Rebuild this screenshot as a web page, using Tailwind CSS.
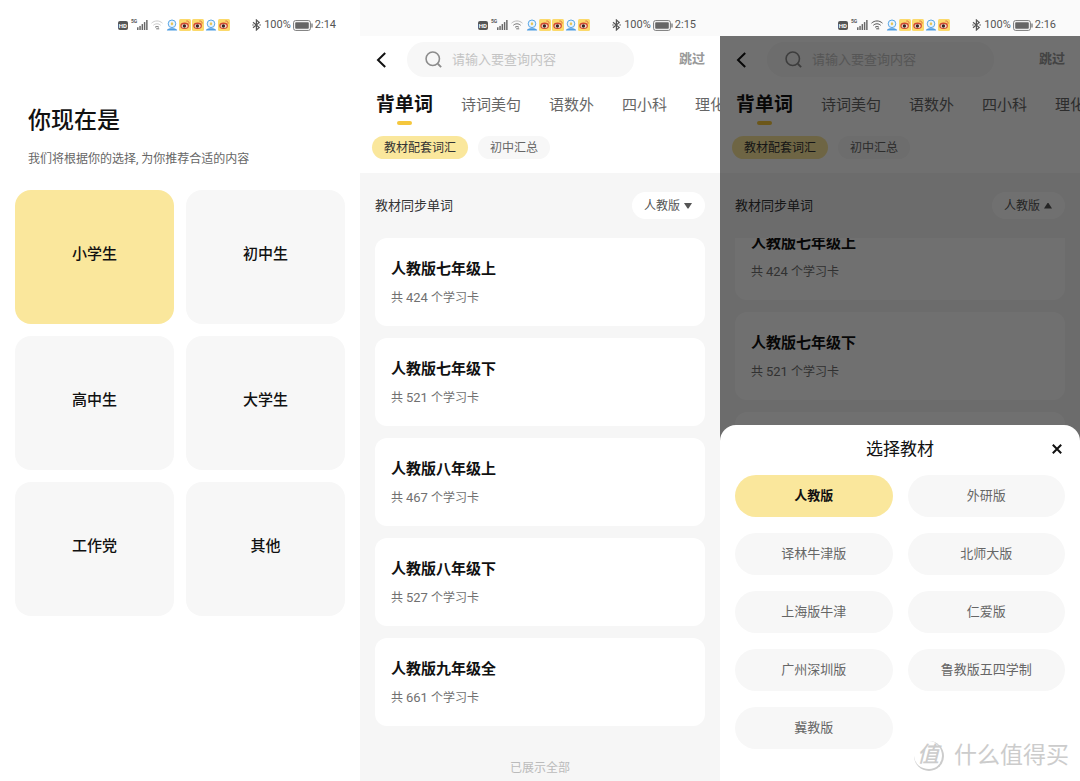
<!DOCTYPE html>
<html lang="zh-CN">
<head>
<meta charset="utf-8">
<meta name="viewport" content="width=device-width, initial-scale=1">
<title>背单词</title>
<script src="https://cdn.jsdelivr.net/npm/@tailwindcss/browser@4"></script>
</head>
<body class="bg-white font-['Roboto','Noto_Sans_CJK_SC',sans-serif] text-[#111]">
<svg class="hidden" aria-hidden="true">
  <symbol id="signal" viewBox="0 0 12 11"><g fill="#666"><rect x="0" y="8" width="1.6" height="3"/><rect x="2.5" y="6.5" width="1.6" height="4.5"/><rect x="5" y="4.5" width="1.6" height="6.5"/><rect x="7.5" y="2.3" width="1.6" height="8.7"/><rect x="10" y="0" width="1.6" height="11"/></g></symbol>
  <symbol id="user" viewBox="0 0 12 12"><circle cx="6" cy="4.8" r="3.8" fill="#e9f4fd" stroke="#5aa7e6" stroke-width="1"/><path d="M6 2.8 7.4 5 6 6.6 4.6 5Z" fill="#e8c34a"/><path d="M.8 11.4C1.4 9.5 3 9.2 6 9.2s4.6.3 5.2 2.2Z" fill="#4f9de2"/></symbol>
  <symbol id="weibo" viewBox="0 0 12 12"><rect width="12" height="12" rx="1.5" fill="#fbd96b"/><ellipse cx="5.6" cy="6.8" rx="4.3" ry="3.2" fill="#d04a35"/><ellipse cx="5.6" cy="7" rx="3" ry="2.1" fill="#f6e4d4"/><circle cx="5.4" cy="7" r="1.7" fill="#3a2420"/><path d="M7.4 2c1.900-.2 2.900 1 2.600 2.700" fill="none" stroke="#e0693e" stroke-width="1"/></symbol>
  <symbol id="bt" viewBox="0 0 9 12"><path d="M1 3.300 7.200 8.500 4.400 11V1l2.800 2.500L1 8.700" fill="none" stroke="#555" stroke-width="1.200"/><circle cx="1" cy="6" r=".7" fill="#555"/><circle cx="8.100" cy="6" r=".7" fill="#555"/></symbol>
  <symbol id="battery" viewBox="0 0 20 11"><rect x=".6" y=".6" width="16.800" height="9.800" rx="2" fill="none" stroke="#777" stroke-width="1"/><rect x="2.200" y="2.200" width="13.600" height="6.600" rx=".8" fill="#666"/><path d="M19 3.500v4" stroke="#777" stroke-width="1.300"/></symbol>
  <symbol id="back" viewBox="0 0 11 16"><path d="M9.200 1 2 8l7.200 7" fill="none" stroke="#111" stroke-width="2"/></symbol>
  <symbol id="search" viewBox="0 0 16 16"><circle cx="7.300" cy="7.300" r="6.300" fill="none" stroke="#8c8c8c" stroke-width="1.500"/><path d="m12 12 3.200 3.200" stroke="#8c8c8c" stroke-width="1.700"/></symbol>
</svg>

<main class="grid min-h-screen grid-cols-3">

  <!-- Identity picker -->
  <section class="flex min-w-0 flex-col bg-white">
    <header class="flex h-9 items-center justify-end pr-6 pt-[14px] text-[11px] text-[#555]">
      <span class="mr-[3px] flex h-[9px] w-[10px] items-center justify-center rounded-[2px] bg-[#555] text-[6px] font-bold text-white">HD</span>
      <span class="h-3 text-[5px] leading-[5px] font-bold">5G</span>
      <svg class="mr-[3px] h-[10px] w-[11px]"><use href="#signal"/></svg>
      <svg class="mr-[3px] h-[10px] w-3" viewBox="0 0 12 10" fill="none" stroke="#ccc"><path d="M.5 3.200c3.300-3 7.700-3 11 0M2.300 5.300c2.200-2 5.200-2 7.400 0"/><path d="M4 7.300c1.200-1 2.800-1 4 0M5.200 8.800h3" stroke="#777"/></svg>
      <span class="mr-[22px] flex gap-px">
        <svg class="size-3"><use href="#user"/></svg><svg class="size-3"><use href="#weibo"/></svg><svg class="size-3"><use href="#weibo"/></svg><svg class="size-3"><use href="#user"/></svg><svg class="size-3"><use href="#weibo"/></svg>
      </span>
      <svg class="mr-[3px] h-3 w-[9px]"><use href="#bt"/></svg>
      <span class="mr-[2px]">100%</span>
      <svg class="mr-[2px] h-[11px] w-5"><use href="#battery"/></svg>
      <time>2:14</time>
    </header>
    <div class="px-7 pt-[69px]">
      <h1 class="text-[23px] leading-8 font-medium">你现在是</h1>
      <p class="mt-3 text-[12px] leading-5 whitespace-nowrap text-[#666]">我们将根据你的选择, 为你推荐合适的内容</p>
    </div>
    <div class="mt-[21px] grid grid-cols-2 gap-3 px-[15px] text-[15px] font-medium">
      <button class="h-[134px] rounded-2xl bg-[#fae79c] pb-[6px]">小学生</button>
      <button class="h-[134px] rounded-2xl bg-[#f7f7f7] pb-[6px]">初中生</button>
      <button class="h-[134px] rounded-2xl bg-[#f7f7f7] pb-[6px]">高中生</button>
      <button class="h-[134px] rounded-2xl bg-[#f7f7f7] pb-[6px]">大学生</button>
      <button class="h-[134px] rounded-2xl bg-[#f7f7f7] pb-[6px]">工作党</button>
      <button class="h-[134px] rounded-2xl bg-[#f7f7f7] pb-[6px]">其他</button>
    </div>
  </section>

  <!-- Word list -->
  <section class="flex min-w-0 flex-col bg-white">
    <header class="flex h-9 items-center justify-end bg-[#fafafa] pr-6 pt-[14px] text-[11px] text-[#555]">
      <span class="mr-[3px] flex h-[9px] w-[10px] items-center justify-center rounded-[2px] bg-[#555] text-[6px] font-bold text-white">HD</span>
      <span class="h-3 text-[5px] leading-[5px] font-bold">5G</span>
      <svg class="mr-[3px] h-[10px] w-[11px]"><use href="#signal"/></svg>
      <svg class="mr-[3px] h-[10px] w-3" viewBox="0 0 12 10" fill="none" stroke="#777"><path d="M.5 3.200c3.300-3 7.700-3 11 0" stroke="#bbb"/><path d="M2.300 5.300c2.200-2 5.200-2 7.400 0M4 7.300c1.200-1 2.800-1 4 0M5.200 8.800h3"/></svg>
      <span class="mr-[22px] flex gap-px">
        <svg class="size-3"><use href="#user"/></svg><svg class="size-3"><use href="#weibo"/></svg><svg class="size-3"><use href="#weibo"/></svg><svg class="size-3"><use href="#user"/></svg><svg class="size-3"><use href="#weibo"/></svg>
      </span>
      <svg class="mr-[3px] h-3 w-[9px]"><use href="#bt"/></svg>
      <span class="mr-[2px]">100%</span>
      <svg class="mr-[2px] h-[11px] w-5"><use href="#battery"/></svg>
      <time>2:15</time>
    </header>
    <div class="flex items-center pt-[6px] pr-[15px] pl-4">
      <button aria-label="返回"><svg class="h-4 w-[11px]"><use href="#back"/></svg></button>
      <label class="ml-5 flex h-[35px] min-w-0 flex-1 items-center gap-[10px] rounded-full bg-[#f7f7f7] pl-[18px]">
        <svg class="size-[17px] shrink-0"><use href="#search"/></svg>
        <input type="search" aria-label="搜索" placeholder="请输入要查询内容" class="w-full min-w-0 bg-transparent text-[13px] outline-none placeholder:text-[#c4c4c4]">
      </label>
      <button class="ml-[45px] pb-[2px] text-[13px] font-bold text-[#999]">跳过</button>
    </div>
    <nav class="mt-[10px] flex h-[38px] gap-7 overflow-hidden pl-4 text-[15px] leading-9 whitespace-nowrap text-[#666]">
      <a href="#words" class="flex flex-col items-center text-[19px] font-bold text-[#111]"><span class="h-[34px]">背单词</span><span class="h-1 w-[15px] rounded-full bg-[#f5c73d]"></span></a>
      <a href="#poems">诗词美句</a>
      <a href="#main">语数外</a>
      <a href="#four">四小科</a>
      <a href="#science">理化</a>
    </nav>
    <div class="mt-[11px] mb-[14px] flex gap-[10px] pl-3 text-[12px]">
      <button class="h-[23px] rounded-full bg-[#fae79c] px-3 text-[#333]">教材配套词汇</button>
      <button class="h-[23px] rounded-full bg-[#f7f7f7] px-3 text-[#666]">初中汇总</button>
    </div>
    <div class="flex flex-1 flex-col bg-[#f6f6f6] px-[15px]">
      <div class="flex h-[65px] items-center justify-between">
        <h2 class="text-[13px] text-[#333]">教材同步单词</h2>
        <label class="flex h-[27px] items-center rounded-full bg-white px-3 text-[12px] text-[#555]">
          <select aria-label="教材版本" class="appearance-none bg-transparent outline-none"><option>人教版</option></select>
          <svg class="ml-[2px] h-[6px] w-[10px]" viewBox="0 0 10 6"><path d="M1 0h8L5.500 5.500h-1Z" fill="#555"/></svg>
        </label>
      </div>
      <ul class="flex flex-col gap-3">
        <li class="h-[88px] rounded-xl bg-white px-4 pt-5"><h3 class="text-[15px] leading-[22px] font-bold">人教版七年级上</h3><p class="mt-2 text-[12px] leading-5 text-[#707070]">共 <span class="text-[13px]">424</span> 个学习卡</p></li>
        <li class="h-[88px] rounded-xl bg-white px-4 pt-5"><h3 class="text-[15px] leading-[22px] font-bold">人教版七年级下</h3><p class="mt-2 text-[12px] leading-5 text-[#707070]">共 <span class="text-[13px]">521</span> 个学习卡</p></li>
        <li class="h-[88px] rounded-xl bg-white px-4 pt-5"><h3 class="text-[15px] leading-[22px] font-bold">人教版八年级上</h3><p class="mt-2 text-[12px] leading-5 text-[#707070]">共 <span class="text-[13px]">467</span> 个学习卡</p></li>
        <li class="h-[88px] rounded-xl bg-white px-4 pt-5"><h3 class="text-[15px] leading-[22px] font-bold">人教版八年级下</h3><p class="mt-2 text-[12px] leading-5 text-[#707070]">共 <span class="text-[13px]">527</span> 个学习卡</p></li>
        <li class="h-[88px] rounded-xl bg-white px-4 pt-5"><h3 class="text-[15px] leading-[22px] font-bold">人教版九年级全</h3><p class="mt-2 text-[12px] leading-5 text-[#707070]">共 <span class="text-[13px]">661</span> 个学习卡</p></li>
      </ul>
      <p class="mt-8 text-center text-[12px] leading-5 text-[#bbb]">已展示全部</p>
    </div>
  </section>

  <!-- Word list with the textbook sheet open -->
  <section class="flex min-w-0 flex-col bg-white">
    <header class="flex h-9 items-center justify-end bg-[#fafafa] pr-6 pt-[14px] text-[11px] text-[#555]">
      <span class="mr-[3px] flex h-[9px] w-[10px] items-center justify-center rounded-[2px] bg-[#555] text-[6px] font-bold text-white">HD</span>
      <span class="h-3 text-[5px] leading-[5px] font-bold">5G</span>
      <svg class="mr-[3px] h-[10px] w-[11px]"><use href="#signal"/></svg>
      <svg class="mr-[3px] h-[10px] w-3" viewBox="0 0 12 10" fill="none" stroke="#555"><path d="M.5 3.200c3.300-3 7.700-3 11 0M2.300 5.300c2.200-2 5.200-2 7.400 0M4 7.300c1.200-1 2.800-1 4 0M5.200 8.800h3"/></svg>
      <span class="mr-[22px] flex gap-px">
        <svg class="size-3"><use href="#user"/></svg><svg class="size-3"><use href="#weibo"/></svg><svg class="size-3"><use href="#weibo"/></svg><svg class="size-3"><use href="#user"/></svg><svg class="size-3"><use href="#weibo"/></svg>
      </span>
      <svg class="mr-[3px] h-3 w-[9px]"><use href="#bt"/></svg>
      <span class="mr-[2px]">100%</span>
      <svg class="mr-[2px] h-[11px] w-5"><use href="#battery"/></svg>
      <time>2:16</time>
    </header>
    <div class="relative flex flex-1 flex-col overflow-hidden">
      <div class="flex items-center pt-[6px] pr-[15px] pl-4">
        <button aria-label="返回"><svg class="h-4 w-[11px]"><use href="#back"/></svg></button>
        <label class="ml-5 flex h-[35px] min-w-0 flex-1 items-center gap-[10px] rounded-full bg-[#f7f7f7] pl-[18px]">
          <svg class="size-[17px] shrink-0"><use href="#search"/></svg>
          <input type="search" aria-label="搜索" placeholder="请输入要查询内容" class="w-full min-w-0 bg-transparent text-[13px] outline-none placeholder:text-[#c4c4c4]">
        </label>
        <button class="ml-[45px] pb-[2px] text-[13px] font-bold text-[#999]">跳过</button>
      </div>
      <nav class="mt-[10px] flex h-[38px] gap-7 overflow-hidden pl-4 text-[15px] leading-9 whitespace-nowrap text-[#666]">
        <a href="#words" class="flex flex-col items-center text-[19px] font-bold text-[#111]"><span class="h-[34px]">背单词</span><span class="h-1 w-[15px] rounded-full bg-[#f5c73d]"></span></a>
        <a href="#poems">诗词美句</a>
        <a href="#main">语数外</a>
        <a href="#four">四小科</a>
        <a href="#science">理化</a>
      </nav>
      <div class="mt-[11px] mb-[14px] flex gap-[10px] pl-3 text-[12px]">
        <button class="h-[23px] rounded-full bg-[#fae79c] px-3 text-[#333]">教材配套词汇</button>
        <button class="h-[23px] rounded-full bg-[#f7f7f7] px-3 text-[#666]">初中汇总</button>
      </div>
      <div class="flex flex-1 flex-col bg-[#f6f6f6] px-[15px]">
        <div class="flex h-[65px] items-center justify-between">
          <h2 class="text-[13px] text-[#333]">教材同步单词</h2>
          <label class="flex h-[27px] items-center rounded-full bg-white px-3 text-[12px] text-[#555]">
            <select aria-label="教材版本" class="appearance-none bg-transparent outline-none"><option>人教版</option></select>
            <svg class="ml-[2px] h-[6px] w-[10px]" viewBox="0 0 10 6"><path d="M1 5.500h8L5.500 0h-1Z" fill="#555"/></svg>
          </label>
        </div>
        <div class="overflow-hidden">
          <ul class="-mt-[26px] flex flex-col gap-3">
            <li class="h-[88px] rounded-xl bg-white px-4 pt-5"><h3 class="text-[15px] leading-[22px] font-bold">人教版七年级上</h3><p class="mt-2 text-[12px] leading-5 text-[#707070]">共 <span class="text-[13px]">424</span> 个学习卡</p></li>
            <li class="h-[88px] rounded-xl bg-white px-4 pt-5"><h3 class="text-[15px] leading-[22px] font-bold">人教版七年级下</h3><p class="mt-2 text-[12px] leading-5 text-[#707070]">共 <span class="text-[13px]">521</span> 个学习卡</p></li>
            <li class="h-[88px] rounded-xl bg-white px-4 pt-5"><h3 class="text-[15px] leading-[22px] font-bold">人教版八年级上</h3><p class="mt-2 text-[12px] leading-5 text-[#707070]">共 <span class="text-[13px]">467</span> 个学习卡</p></li>
          </ul>
        </div>
      </div>

      <div class="absolute inset-0 flex flex-col justify-end bg-black/56">
        <div role="dialog" aria-label="选择教材" class="relative rounded-t-2xl bg-white px-[15px] pt-[10px] pb-8">
          <div class="grid grid-cols-[1fr_auto_1fr] items-center">
            <h2 class="col-start-2 text-[17px] leading-7">选择教材</h2>
            <button aria-label="关闭" class="justify-self-end pr-[3px]"><svg class="size-[10px]" viewBox="0 0 10 10"><path d="m.8.8 8.400 8.400M9.200.8.8 9.200" stroke="#111" stroke-width="2"/></svg></button>
          </div>
          <div class="mt-3 grid grid-cols-2 gap-x-[15px] gap-y-4 text-[13px] text-[#666]">
            <button class="h-[42px] rounded-full bg-[#fae79c] font-bold text-[#111]">人教版</button>
            <button class="h-[42px] rounded-full bg-[#f7f7f7]">外研版</button>
            <button class="h-[42px] rounded-full bg-[#f7f7f7]">译林牛津版</button>
            <button class="h-[42px] rounded-full bg-[#f7f7f7]">北师大版</button>
            <button class="h-[42px] rounded-full bg-[#f7f7f7]">上海版牛津</button>
            <button class="h-[42px] rounded-full bg-[#f7f7f7]">仁爱版</button>
            <button class="h-[42px] rounded-full bg-[#f7f7f7]">广州深圳版</button>
            <button class="h-[42px] rounded-full bg-[#f7f7f7]">鲁教版五四学制</button>
            <button class="h-[42px] rounded-full bg-[#f7f7f7]">冀教版</button>
          </div>
          <div class="absolute right-[11px] bottom-[10px] flex items-center gap-[10px] text-[23px] leading-[30px] text-[#ccc]">
            <span class="flex size-[30px] items-center justify-center rounded-full border-r-2 border-b-2 border-[#ccc] text-[22px] font-medium italic">值</span>
            <span>什么值得买</span>
          </div>
        </div>
      </div>
    </div>
  </section>
</main>
</body>
</html>
